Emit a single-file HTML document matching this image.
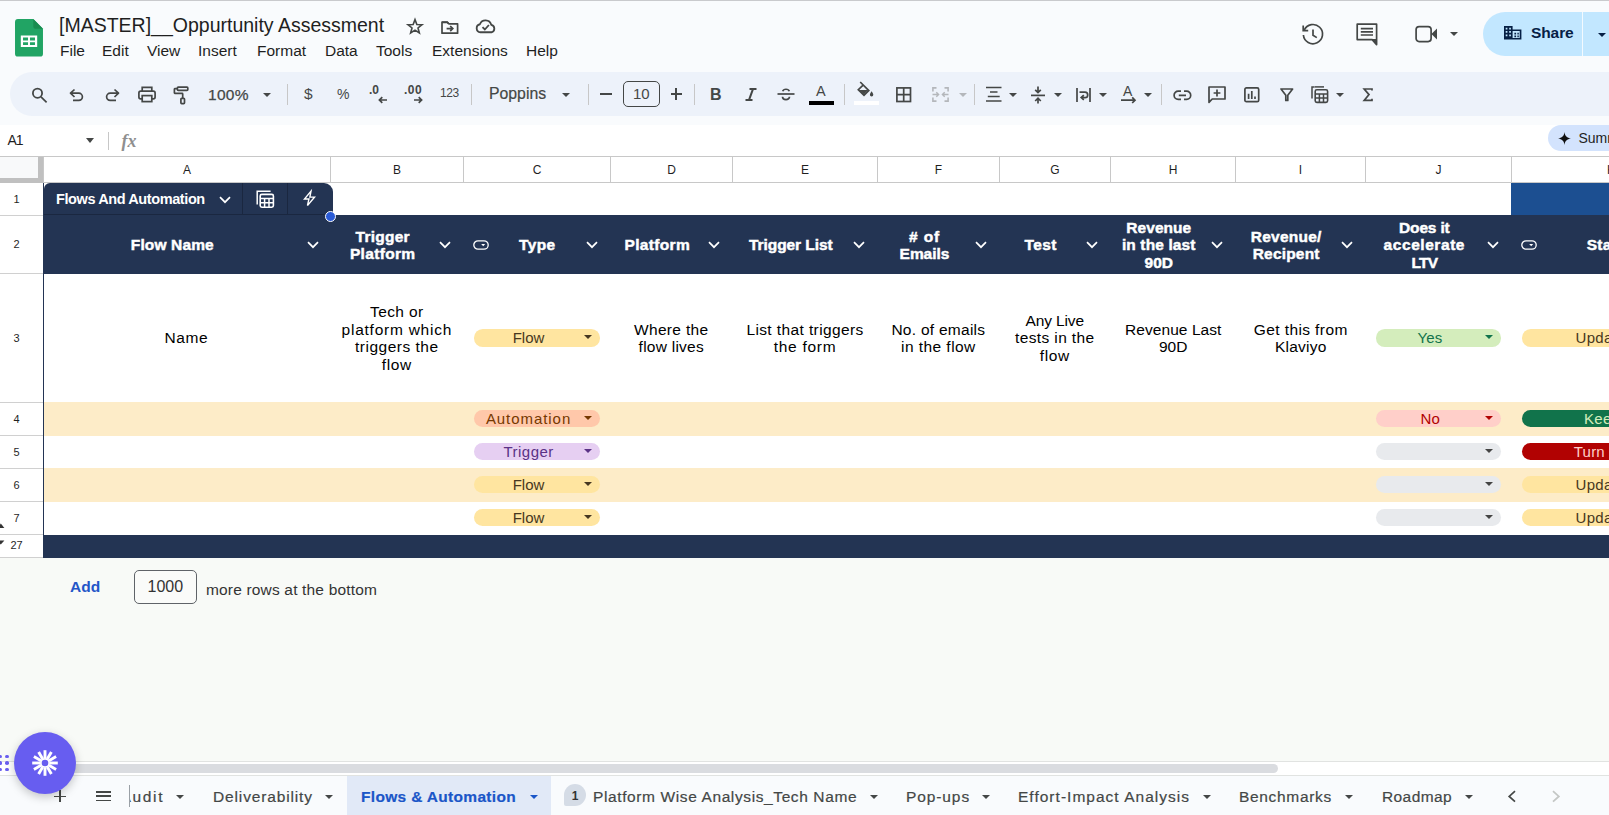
<!DOCTYPE html>
<html>
<head>
<meta charset="utf-8">
<title>Sheets</title>
<style>
*{box-sizing:border-box;margin:0;padding:0}
html,body{width:1609px;height:815px;overflow:hidden;background:#f9fbfd;font-family:"Liberation Sans",sans-serif;}
#root{position:relative;width:1609px;height:815px;overflow:hidden;background:#f9fbfd}
.abs{position:absolute}
.t{position:absolute;white-space:nowrap;color:#1f1f1f}
svg{position:absolute;overflow:visible}
/* grid */
.colh{position:absolute;top:157px;height:22px;font-size:12px;color:#1f1f1f;text-align:center;line-height:26px;border-right:1px solid #c8c8c8;background:#fff}
.rowh{position:absolute;left:0;width:43px;padding-right:10px;font-size:11px;color:#1f1f1f;text-align:center;background:#fff;border-bottom:1px solid #d0d0d0}
.hd{position:absolute;color:#fff;font-weight:bold;-webkit-text-stroke:0.45px #fff;white-space:nowrap;font-size:15.5px;line-height:18px}
.cell{position:absolute;color:#000;white-space:nowrap;font-size:15.5px;line-height:18px}
.chev{position:absolute;width:11px;height:7px}
.chip{position:absolute;height:17.5px;border-radius:8.75px;font-size:15px;line-height:17.5px}
.chip i{position:absolute;top:6.4px;width:0;height:0;border-left:4.3px solid transparent;border-right:4.3px solid transparent;border-top:4.8px solid #444}
.tab{position:absolute;top:776px;height:39px;font-size:16px;line-height:42px;-webkit-text-stroke:0.2px currentColor;color:#444746;letter-spacing:0.45px;white-space:nowrap}
.tri{position:absolute;width:0;height:0;border-left:4.5px solid transparent;border-right:4.5px solid transparent;border-top:5px solid #444746}
</style>
</head>
<body>
<div id="root">

<!-- TOP BAR -->
<div class="abs" style="left:0;top:0;width:1609px;height:1px;background:#c9cacd"></div>
<!-- sheets logo -->
<svg style="left:15px;top:18.5px" width="28" height="37.6" viewBox="0 0 29 39">
  <path d="M3 0h16l10 10v26a3 3 0 0 1-3 3H3a3 3 0 0 1-3-3V3a3 3 0 0 1 3-3z" fill="#21a464"/>
  <path d="M19 0l10 10h-8a2 2 0 0 1-2-2z" fill="#188c50"/>
  <path d="M6 17h17v12H6z M8.3 19.2v3h5.2v-3z M15.5 19.2v3h5.2v-3z M8.3 24v3h5.2v-3z M15.5 24v3h5.2v-3z" fill="#fff" fill-rule="evenodd"/>
</svg>
<div class="t" id="title" style="left:59px;top:12.2px;font-size:19.5px;line-height:26px;color:#1f1f1f">[MASTER]__Oppurtunity Assessment</div>

<svg style="left:405.1px;top:16.8px" width="20" height="20" viewBox="-10 -10 20 20"><polygon points="0.00,-7.40 1.85,-2.55 7.04,-2.29 3.00,0.97 4.35,5.99 0.00,3.15 -4.35,5.99 -3.00,0.97 -7.04,-2.29 -1.85,-2.55" fill="none" stroke="#444746" stroke-width="1.6" stroke-linejoin="miter"/></svg>
<svg style="left:441.2px;top:20.5px" width="18" height="14" viewBox="0 0 18 14"><path d="M1 12.2 V1 H6.2 L7.8 2.8 H16.6 V12.2 Z" fill="none" stroke="#444746" stroke-width="1.7" stroke-linejoin="round"/><path d="M1 1.4 H6.4 L7.6 2.8" fill="none" stroke="#444746" stroke-width="1.7" stroke-width="2.4"/><path d="M5.6 7.6 H11.6 M9.2 5 L11.8 7.6 L9.2 10.2" fill="none" stroke="#444746" stroke-width="1.7" stroke-width="1.6"/></svg>
<svg style="left:475.3px;top:19px" width="21.4" height="15" viewBox="0 0 20 14"><path d="M5 12.4 A3.8 3.8 0 0 1 4.6 4.9 A5.6 5.6 0 0 1 15.2 5.4 A3.6 3.6 0 0 1 15.4 12.4 Z" fill="none" stroke="#444746" stroke-width="1.7" stroke-linejoin="round"/><path d="M7 7.6 L9.2 9.8 L13 5.6" fill="none" stroke="#444746" stroke-width="1.7" stroke-width="1.5"/></svg>
<svg style="left:1301px;top:22.8px" width="24" height="24" viewBox="0 0 24 24"><path d="M3.2 7.2 A9.6 9.6 0 1 1 2.4 12" fill="none" stroke="#444746" stroke-width="1.7" stroke-width="2"/><path d="M2.2 2.6 V7.6 H7.2" fill="none" stroke="#444746" stroke-width="1.7" stroke-width="2"/><path d="M12 6.6 V12.2 L15.8 14.6" fill="none" stroke="#444746" stroke-width="1.7" stroke-width="2"/></svg>
<svg style="left:1356px;top:23px" width="23" height="23" viewBox="0 0 23 23"><path d="M1.2 1.2 H20.6 V21.6 L16.2 16.6 H1.2 Z" fill="none" stroke="#444746" stroke-width="1.7" stroke-width="2" stroke-linejoin="round"/><path d="M4.8 5.6 H17 M4.8 8.8 H17 M4.8 12 H17" fill="none" stroke="#444746" stroke-width="1.7" stroke-width="1.7"/><path d="M20.6 21.8 V16 H15.5Z" fill="#444746"/></svg>
<svg style="left:1415px;top:25px" width="23" height="18" viewBox="0 0 23 18"><rect x="1.1" y="1.6" width="15" height="15" rx="3" fill="none" stroke="#444746" stroke-width="1.7" stroke-width="2.1"/><path d="M16.4 9 L22 3.6 V14.6Z" fill="#444746"/></svg>
<div class="tri" style="left:1449.5px;top:32px;border-top-color:#444746;border-left-width:4.5px;border-right-width:4.5px;border-top-width:4.5px"></div>
<div class="abs" style="left:1483px;top:12px;width:150px;height:44px;border-radius:22px;background:#c2e7ff"></div>
<div class="abs" style="left:1582px;top:12px;width:1px;height:44px;background:#f3faff"></div>
<svg style="left:1504px;top:26px" width="18" height="14" viewBox="0 0 18 14"><path d="M0 0 H8.6 V3.4 H17.4 V13.6 H0 Z" fill="#062045"/><path d="M1.7 1.7h1.7v1.7h-1.7z M5.2 1.7h1.7v1.7h-1.7z M1.7 5.1h1.7v1.7h-1.7z M5.2 5.1h1.7v1.7h-1.7z M1.7 8.5h1.7v1.7h-1.7z M5.2 8.5h1.7v1.7h-1.7z M8.6 5.1h7.1v6.8h-7.1z" fill="#c2e7ff"/><path d="M10.4 6.8h1.7v1.7h-1.7z M13.4 6.8h1.4v1.7h-1.4z M10.4 9.6h1.7v1.6h-1.7z M13.4 9.6h1.4v1.6h-1.4z" fill="#062045"/></svg>
<div class="t" style="left:1531px;top:23px;font-size:15.5px;line-height:20px;font-weight:bold;color:#062045;letter-spacing:-0.1px">Share</div>
<div class="tri" style="left:1597.5px;top:32.5px;border-top-color:#062045;border-left-width:4.5px;border-right-width:4.5px;border-top-width:4.5px"></div>
<!-- MENU -->
<div class="t menu" style="left:60px;top:41.4px;font-size:15.5px;line-height:20px">File</div>
<div class="t menu" style="left:102px;top:41.4px;font-size:15.5px;line-height:20px">Edit</div>
<div class="t menu" style="left:147px;top:41.4px;font-size:15.5px;line-height:20px">View</div>
<div class="t menu" style="left:198px;top:41.4px;font-size:15.5px;line-height:20px">Insert</div>
<div class="t menu" style="left:257px;top:41.4px;font-size:15.5px;line-height:20px">Format</div>
<div class="t menu" style="left:325px;top:41.4px;font-size:15.5px;line-height:20px">Data</div>
<div class="t menu" style="left:376px;top:41.4px;font-size:15.5px;line-height:20px">Tools</div>
<div class="t menu" style="left:432px;top:41.4px;font-size:15.5px;line-height:20px">Extensions</div>
<div class="t menu" style="left:526px;top:41.4px;font-size:15.5px;line-height:20px">Help</div>

<!-- TOOLBAR PILL -->
<div class="abs" style="left:10px;top:72px;width:1640px;height:44px;border-radius:22px;background:#edf2fa"></div>

<svg style="left:29px;top:85px" width="20" height="20" viewBox="0 0 20 20"><circle cx="8.5" cy="8.2" r="4.6" fill="none" stroke="#444746" stroke-width="1.8"/><path d="M12 11.8 L17.6 17.4" fill="none" stroke="#444746" stroke-width="1.7" stroke-width="2"/></svg>
<svg style="left:69px;top:88px" width="16" height="14" viewBox="0 0 16 14"><path d="M5.5 1.5 L1.5 5.2 L5.5 9 M1.8 5.2 H9.8 A3.6 3.6 0 0 1 9.8 12.4 H4" fill="none" stroke="#444746" stroke-width="1.7" stroke-linejoin="round"/></svg>
<svg style="left:104px;top:88px" width="16" height="14" viewBox="0 0 16 14"><path d="M10.5 1.5 L14.5 5.2 L10.5 9 M14.2 5.2 H6.2 A3.6 3.6 0 0 0 6.2 12.4 H12" fill="none" stroke="#444746" stroke-width="1.7" stroke-linejoin="round"/></svg>
<svg style="left:138px;top:86px" width="18" height="17" viewBox="0 0 18 17"><path d="M4.2 5.2 V1.3 H13.8 V5.2" fill="none" stroke="#444746" stroke-width="1.7"/><rect x="0.9" y="5.2" width="16.2" height="7.6" rx="1.8" fill="none" stroke="#444746" stroke-width="1.7"/><rect x="4.2" y="9.6" width="9.6" height="6" fill="#edf2fa" stroke="#444746" stroke-width="1.7"/></svg>
<svg style="left:172px;top:85px" width="18" height="20" viewBox="0 0 18 20"><rect x="5.4" y="2.1" width="10.4" height="3.2" rx="0.8" fill="none" stroke="#444746" stroke-width="1.7"/><path d="M5.4 3.7 H2.9 A0.6 0.6 0 0 0 2.4 4.3 V7.8 A0.6 0.6 0 0 0 2.9 8.3 H10.1 A0.6 0.6 0 0 1 10.7 8.9 V13" fill="none" stroke="#444746" stroke-width="1.7"/><rect x="8.9" y="13.3" width="3.6" height="5.3" rx="0.8" fill="none" stroke="#444746" stroke-width="1.7"/></svg>
<div class="t" style="left:208px;top:85.4px;font-size:15.5px;line-height:20px;color:#444746;letter-spacing:0.3px;-webkit-text-stroke:0.25px #444746">100%</div>
<div class="tri" style="left:263.0px;top:93px;border-top-color:#444746;border-left-width:4.5px;border-right-width:4.5px;border-top-width:4.5px"></div>
<div class="abs" style="left:287px;top:84px;width:1px;height:21px;background:#c7c7c7"></div>
<div class="t" style="left:304px;top:84px;font-size:15.5px;line-height:20px;color:#444746;">$</div>
<div class="t" style="left:337px;top:84px;font-size:14px;line-height:20px;color:#444746;">%</div>
<div class="t" style="left:369px;top:82px;font-size:12px;line-height:16px;color:#444746;font-weight:bold">.0</div>
<svg style="left:378px;top:96px" width="10" height="8" viewBox="0 0 10 8"><path d="M9 4 H1.5 M4.3 1.2 L1.4 4 L4.3 6.8" fill="none" stroke="#444746" stroke-width="1.7" stroke-width="1.4"/></svg>
<div class="t" style="left:404px;top:82px;font-size:12px;line-height:16px;color:#444746;font-weight:bold;letter-spacing:0.5px">.00</div>
<svg style="left:413px;top:96px" width="10" height="8" viewBox="0 0 10 8"><path d="M1 4 H8.5 M5.7 1.2 L8.6 4 L5.7 6.8" fill="none" stroke="#444746" stroke-width="1.7" stroke-width="1.4"/></svg>
<div class="t" style="left:440px;top:84px;font-size:12px;line-height:18px;color:#444746;letter-spacing:-0.4px">123</div>
<div class="abs" style="left:471px;top:84px;width:1px;height:21px;background:#c7c7c7"></div>
<div class="t" style="left:489px;top:84px;font-size:15.8px;line-height:20px;color:#444746;-webkit-text-stroke:0.2px #444746">Poppins</div>
<div class="tri" style="left:562.0px;top:93px;border-top-color:#444746;border-left-width:4.5px;border-right-width:4.5px;border-top-width:4.5px"></div>
<div class="abs" style="left:588px;top:84px;width:1px;height:21px;background:#c7c7c7"></div>
<div class="abs" style="left:600px;top:93.2px;width:12px;height:1.6px;background:#444746"></div>
<div class="abs" style="left:623px;top:81px;width:37px;height:26px;border:1px solid #444746;border-radius:5px"></div>
<div class="t" style="left:633px;top:84.3px;font-size:15px;line-height:20px;color:#444746;">10</div>
<div class="abs" style="left:670.5px;top:93.2px;width:11.5px;height:1.6px;background:#444746"></div>
<div class="abs" style="left:675.4px;top:88.2px;width:1.6px;height:11.5px;background:#444746"></div>
<div class="abs" style="left:694px;top:84px;width:1px;height:21px;background:#c7c7c7"></div>
<div class="t" style="left:710px;top:85px;font-size:16px;line-height:20px;color:#444746;font-weight:bold">B</div>
<svg style="left:745px;top:88px" width="12" height="12" viewBox="0 0 12 12"><path d="M4.5 1 H11.5 M0.5 12 H7.5 M8 1 L4 12" fill="none" stroke="#444746" stroke-width="2.1"/></svg>
<svg style="left:777px;top:86px" width="18" height="16" viewBox="0 0 18 16"><path d="M0.5 8 H17.5" fill="none" stroke="#444746" stroke-width="1.7" stroke-width="1.5"/><path d="M12.3 5.2 A3.4 2.6 0 0 0 5.7 5.2 M5.5 10.8 A3.5 2.8 0 0 0 12.5 10.8" fill="none" stroke="#444746" stroke-width="1.7" stroke-width="1.9"/></svg>
<div class="t" style="left:816px;top:81px;font-size:14.5px;line-height:20px;color:#444746;">A</div>
<div class="abs" style="left:809px;top:101px;width:25px;height:4px;background:#000"></div>
<div class="abs" style="left:844px;top:84px;width:1px;height:21px;background:#c7c7c7"></div>
<svg style="left:857px;top:81px" width="18" height="17" viewBox="0 0 18 17"><path d="M3.2 1 L11.8 9.6 L7 14.4 L1.3 8.7 L6.4 3.8" fill="none" stroke="#444746" stroke-width="1.7" stroke-width="1.6"/><path d="M2.2 8.9 H11.4 L7 13.4Z" fill="#444746"/><path d="M14.6 10.2 C15.6 11.8 16.3 12.7 16.3 13.7 A1.7 1.7 0 0 1 12.9 13.7 C12.9 12.7 13.6 11.8 14.6 10.2Z" fill="#444746"/></svg>
<div class="abs" style="left:854px;top:101px;width:25px;height:4px;background:#fff"></div>
<svg style="left:896px;top:86.5px" width="16" height="16" viewBox="0 0 16 16"><rect x="0.9" y="0.9" width="13.6" height="13.6" fill="none" stroke="#444746" stroke-width="1.7"/><path d="M7.7 0.9 V14.5 M0.9 7.7 H14.5" fill="none" stroke="#444746" stroke-width="1.7"/></svg>
<svg style="left:931.5px;top:86.5px" width="18" height="16" viewBox="0 0 18 16"><path d="M4.5 0.9 H0.9 V4.5 M0.9 10.5 V14.1 H4.5 M12.5 0.9 H16.1 V4.5 M16.1 10.5 V14.1 H12.5" fill="none" stroke="#b4b7bb" stroke-width="1.6"/><path d="M0.5 7.5 H6.5 M4.3 5.2 L6.6 7.5 L4.3 9.8 M16.5 7.5 H10.5 M12.7 5.2 L10.4 7.5 L12.7 9.8" fill="none" stroke="#b4b7bb" stroke-width="1.4"/></svg>
<div class="tri" style="left:958.5px;top:93px;border-top-color:#b4b7bb;border-left-width:4.5px;border-right-width:4.5px;border-top-width:4.5px"></div>
<div class="abs" style="left:974px;top:84px;width:1px;height:21px;background:#c7c7c7"></div>
<svg style="left:985.5px;top:86px" width="16" height="17" viewBox="0 0 16 17"><path d="M0 1.5 H15.5 M4 6 H11.5 M1.8 10.5 H13.7 M0 15 H15.5" fill="none" stroke="#444746" stroke-width="1.7" stroke-width="1.5"/></svg>
<div class="tri" style="left:1008.5px;top:93px;border-top-color:#444746;border-left-width:4.5px;border-right-width:4.5px;border-top-width:4.5px"></div>
<svg style="left:1030.5px;top:85.5px" width="14" height="18" viewBox="0 0 14 18"><path d="M0 9.4 H14" fill="none" stroke="#444746" stroke-width="1.7" stroke-width="1.5"/><path d="M7 0.5 V6.5 M4.2 3.8 L7 6.6 L9.8 3.8 M7 17.5 V12.2 M4.2 15 L7 12.2 L9.8 15" fill="none" stroke="#444746" stroke-width="1.7" stroke-width="1.5"/></svg>
<div class="tri" style="left:1053.5px;top:93px;border-top-color:#444746;border-left-width:4.5px;border-right-width:4.5px;border-top-width:4.5px"></div>
<svg style="left:1075.5px;top:87.5px" width="15" height="14" viewBox="0 0 15 14"><path d="M1 0 V14 M14 0 V14" fill="none" stroke="#444746" stroke-width="1.7" stroke-width="1.6"/><path d="M3.5 4.2 H9 A2.6 2.6 0 0 1 9 9.6 H5.5 M7.8 7.2 L5.2 9.6 L7.8 12" fill="none" stroke="#444746" stroke-width="1.7" stroke-width="1.5"/></svg>
<div class="tri" style="left:1098.5px;top:93px;border-top-color:#444746;border-left-width:4.5px;border-right-width:4.5px;border-top-width:4.5px"></div>
<div class="t" style="left:1123px;top:80.5px;font-size:14px;line-height:20px;color:#444746;">A</div>
<svg style="left:1121px;top:96px" width="16" height="8" viewBox="0 0 16 8"><path d="M0 4.2 H14 M11.2 1.4 L14 4.2 L11.2 7" fill="none" stroke="#444746" stroke-width="1.7" stroke-width="1.5"/></svg>
<div class="tri" style="left:1143.5px;top:93px;border-top-color:#444746;border-left-width:4.5px;border-right-width:4.5px;border-top-width:4.5px"></div>
<div class="abs" style="left:1161px;top:84px;width:1px;height:21px;background:#c7c7c7"></div>
<svg style="left:1173px;top:89.5px" width="19" height="11" viewBox="0 0 19 11"><path d="M8 1.2 H5.2 A4 4 0 0 0 5.2 9.4 H8 M11 1.2 H13.6 A4 4 0 0 1 13.6 9.4 H11 M5.8 5.3 H13" fill="none" stroke="#444746" stroke-width="1.7" stroke-width="1.8"/></svg>
<svg style="left:1208px;top:86px" width="18" height="18" viewBox="0 0 18 18"><path d="M1 1 H17 V13 H4.2 L1 16.4 Z" fill="none" stroke="#444746" stroke-width="1.7" stroke-linejoin="round"/><path d="M5.6 7 H12.4 M9 3.6 V10.4" fill="none" stroke="#444746" stroke-width="1.7" stroke-width="1.6"/></svg>
<svg style="left:1244px;top:87px" width="16" height="16" viewBox="0 0 16 16"><rect x="0.9" y="0.9" width="13.8" height="13.8" rx="1.5" fill="none" stroke="#444746" stroke-width="1.7"/><path d="M4.6 12 V6.8 M7.8 12 V4 M11 12 V9.6" fill="none" stroke="#444746" stroke-width="1.7" stroke-width="1.7"/></svg>
<svg style="left:1280px;top:88px" width="14" height="14" viewBox="0 0 14 14"><path d="M1 1 H12.6 L7.8 7.2 V12.4 H5.8 V7.2 Z" fill="none" stroke="#444746" stroke-width="1.7" stroke-linejoin="round"/></svg>
<svg style="left:1310.5px;top:85.5px" width="18" height="18" viewBox="0 0 18 18"><path d="M3.6 1 H1 V12.4" fill="none" stroke="#444746" stroke-width="1.5"/><path d="M3.8 0.9 H13" fill="none" stroke="#444746" stroke-width="1.5"/><rect x="4.2" y="3.8" width="12.4" height="12.6" rx="1.6" fill="none" stroke="#444746" stroke-width="1.6"/><path d="M4.2 8 H16.6 M4.2 12.1 H16.6 M8.4 8 V16.4 M12.5 8 V16.4" fill="none" stroke="#444746" stroke-width="1.5"/></svg>
<div class="tri" style="left:1335.5px;top:93px;border-top-color:#444746;border-left-width:4.5px;border-right-width:4.5px;border-top-width:4.5px"></div>
<svg style="left:1363px;top:88px" width="10" height="14" viewBox="0 0 10 14"><path d="M9 2.6 V1 H1.2 L6 6.6 L1.2 12.4 H9 V10.8" fill="none" stroke="#444746" stroke-width="1.7" stroke-width="1.9" stroke-linejoin="miter"/></svg>
<!-- FORMULA BAR -->
<div class="abs" style="left:0;top:125px;width:1609px;height:31px;background:#fff"></div>
<div class="abs" style="left:0;top:156px;width:1609px;height:1px;background:#c8c8c8"></div>
<div class="t" style="left:7.5px;top:131px;font-size:14px;line-height:18px;color:#1f1f1f;letter-spacing:-1.2px">A1</div>
<div class="tri" style="left:86px;top:138px"></div>
<div class="abs" style="left:108px;top:132px;width:1px;height:18px;background:#c7c7c7"></div>
<div class="t" style="left:121.5px;top:131px;font-family:'Liberation Serif',serif;font-style:italic;font-weight:bold;font-size:18px;line-height:20px;color:#8f8f8f">fx</div>

<div class="abs" style="left:1548px;top:125px;width:120px;height:26px;border-radius:13px;background:#d3e3fd"></div>
<svg style="left:1558px;top:132px" width="13" height="13" viewBox="0 0 13 13"><path d="M6.5 0 C7 4 9 6 13 6.5 C9 7 7 9 6.5 13 C6 9 4 7 0 6.5 C4 6 6 4 6.5 0Z" fill="#111"/></svg>
<div class="t" style="left:1578.5px;top:127.6px;font-size:14px;line-height:20px;color:#1f1f1f">Summarize</div>
<!-- BELOW GRID -->
<div class="abs" style="left:0;top:558px;width:1609px;height:218px;background:#f8faf7"></div>
<!-- GRID -->
<div id="grid" class="abs" style="left:0;top:157px;width:1609px;height:401px;background:#fff"></div>
<div class="abs" style="left:0;top:157px;width:1609px;height:26px;background:#fff"></div>
<div class="abs" style="left:0;top:157px;width:43px;height:26px;background:#f8f9fa"></div>
<div class="abs" style="left:38px;top:157px;width:5px;height:26px;background:#c0c0c0"></div>
<div class="abs" style="left:0;top:178px;width:43px;height:5px;background:#c0c0c0"></div>
<div class="colh" style="left:44px;width:287px;height:25px">A</div>
<div class="colh" style="left:331px;width:133px;height:25px">B</div>
<div class="colh" style="left:464px;width:147px;height:25px">C</div>
<div class="colh" style="left:611px;width:122px;height:25px">D</div>
<div class="colh" style="left:733px;width:145px;height:25px">E</div>
<div class="colh" style="left:878px;width:122px;height:25px">F</div>
<div class="colh" style="left:1000px;width:111px;height:25px">G</div>
<div class="colh" style="left:1111px;width:125px;height:25px">H</div>
<div class="colh" style="left:1236px;width:130px;height:25px">I</div>
<div class="colh" style="left:1366px;width:146px;height:25px">J</div>
<div class="colh" style="left:1512px;width:199px;height:25px">K</div>
<div class="abs" style="left:43px;top:182px;width:1566px;height:1px;background:#c8c8c8"></div>
<div class="abs" style="left:43px;top:157px;width:1px;height:401px;background:#c8c8c8"></div>
<div class="rowh" style="top:183px;height:33px;line-height:32px">1</div>
<div class="rowh" style="top:216px;height:58px;line-height:57px">2</div>
<div class="rowh" style="top:274px;height:129px;line-height:128px">3</div>
<div class="rowh" style="top:403px;height:33px;line-height:32px">4</div>
<div class="rowh" style="top:436px;height:33px;line-height:32px">5</div>
<div class="rowh" style="top:469px;height:33px;line-height:32px">6</div>
<div class="rowh" style="top:502px;height:33px;line-height:32px">7</div>
<div class="rowh" style="top:535px;height:23px;line-height:20px">27</div>
<div class="abs" style="left:44px;top:402px;width:1565px;height:33.6px;background:#fdecc8"></div>
<div class="abs" style="left:44px;top:468px;width:1565px;height:33.6px;background:#fdecc8"></div>
<div class="abs" style="left:44px;top:215px;width:1565px;height:59px;background:#233453"></div>
<div class="abs" style="left:44px;top:535px;width:1565px;height:23px;background:#233453"></div>
<div class="abs" style="left:44px;top:183px;width:289px;height:33px;background:#233453;border-radius:6px 9px 0 0"></div>
<div class="abs" style="left:242px;top:183px;width:1px;height:32px;background:#1a2740"></div>
<div class="abs" style="left:287px;top:183px;width:1px;height:32px;background:#1a2740"></div>
<div class="abs" style="left:44px;top:214px;width:288px;height:1px;background:#1a2740"></div>
<div class="abs" style="left:1511px;top:183px;width:98px;height:32px;background:#1c4f91"></div>
<div class="abs" style="left:43px;top:183px;width:1px;height:375px;background:#233453"></div>
<div class="t" style="left:56px;top:190px;font-size:14.5px;line-height:18px;font-weight:bold;color:#fff;letter-spacing:-0.4px">Flows And Automation</div>
<div class="abs" style="left:324.6px;top:210.8px;width:11.6px;height:11.6px;border-radius:50%;background:#2a5bd7;border:1px solid #fff"></div>
<svg style="left:218.5px;top:196px" width="12" height="8" viewBox="0 0 12 8"><path d="M1 1.2 L6 6.2 L11 1.2" fill="none" stroke="#fff" stroke-width="1.7"/></svg>
<svg style="left:306.5px;top:241px" width="12" height="8" viewBox="0 0 12 8"><path d="M1 1.2 L6 6.2 L11 1.2" fill="none" stroke="#fff" stroke-width="1.7"/></svg>
<svg style="left:439px;top:241px" width="12" height="8" viewBox="0 0 12 8"><path d="M1 1.2 L6 6.2 L11 1.2" fill="none" stroke="#fff" stroke-width="1.7"/></svg>
<svg style="left:586px;top:241px" width="12" height="8" viewBox="0 0 12 8"><path d="M1 1.2 L6 6.2 L11 1.2" fill="none" stroke="#fff" stroke-width="1.7"/></svg>
<svg style="left:708px;top:241px" width="12" height="8" viewBox="0 0 12 8"><path d="M1 1.2 L6 6.2 L11 1.2" fill="none" stroke="#fff" stroke-width="1.7"/></svg>
<svg style="left:853px;top:241px" width="12" height="8" viewBox="0 0 12 8"><path d="M1 1.2 L6 6.2 L11 1.2" fill="none" stroke="#fff" stroke-width="1.7"/></svg>
<svg style="left:975px;top:241px" width="12" height="8" viewBox="0 0 12 8"><path d="M1 1.2 L6 6.2 L11 1.2" fill="none" stroke="#fff" stroke-width="1.7"/></svg>
<svg style="left:1086px;top:241px" width="12" height="8" viewBox="0 0 12 8"><path d="M1 1.2 L6 6.2 L11 1.2" fill="none" stroke="#fff" stroke-width="1.7"/></svg>
<svg style="left:1211px;top:241px" width="12" height="8" viewBox="0 0 12 8"><path d="M1 1.2 L6 6.2 L11 1.2" fill="none" stroke="#fff" stroke-width="1.7"/></svg>
<svg style="left:1341px;top:241px" width="12" height="8" viewBox="0 0 12 8"><path d="M1 1.2 L6 6.2 L11 1.2" fill="none" stroke="#fff" stroke-width="1.7"/></svg>
<svg style="left:1487px;top:241px" width="12" height="8" viewBox="0 0 12 8"><path d="M1 1.2 L6 6.2 L11 1.2" fill="none" stroke="#fff" stroke-width="1.7"/></svg>
<svg style="left:473px;top:240px" width="16" height="10" viewBox="0 0 16 10"><rect x="0.8" y="0.8" width="14.4" height="8.4" rx="4.2" fill="none" stroke="#fff" stroke-width="1.3"/><path d="M8.2 4 h4 l-2 2.2z" fill="#fff"/></svg>
<svg style="left:1521px;top:240px" width="16" height="10" viewBox="0 0 16 10"><rect x="0.8" y="0.8" width="14.4" height="8.4" rx="4.2" fill="none" stroke="#fff" stroke-width="1.3"/><path d="M8.2 4 h4 l-2 2.2z" fill="#fff"/></svg>
<div class="t" style="left:70px;top:577px;font-size:15.5px;line-height:20px;font-weight:bold;color:#2456c8">Add</div>
<div class="abs" style="left:134px;top:570px;width:63px;height:34px;border:1px solid #5f6368;border-radius:5px;background:#fafbf9"></div>
<div class="t" style="left:147.5px;top:577px;font-size:16px;line-height:20px;color:#333">1000</div>
<div class="t" style="left:206px;top:580px;font-size:15.5px;line-height:20px;color:#333;letter-spacing:0.17px">more rows at the bottom</div>
<svg style="left:255.5px;top:189.5px" width="19" height="19" viewBox="0 0 19 19"><path d="M1.2 14.6 V1.2 H14.6" fill="none" stroke="#fff" stroke-width="1.5"/><rect x="4.2" y="4.4" width="13.2" height="12.8" rx="1.6" fill="none" stroke="#fff" stroke-width="1.6"/><path d="M4.2 8.6 H17.4 M4.2 12.8 H17.4 M8.6 8.6 V17.2 M13 8.6 V17.2" fill="none" stroke="#fff" stroke-width="1.5"/></svg>
<svg style="left:303px;top:190.2px" width="13" height="16.8" viewBox="0 0 14 18"><path d="M8.6 1.2 L1.6 9.6 H6.4 L4.8 16.6 L12.4 7.6 H7.4 Z" fill="none" stroke="#fff" stroke-width="1.5" stroke-linejoin="miter"/></svg>
<div class="hd" style="left:130.8px;top:236.4px;letter-spacing:0.13px">Flow Name</div>
<div class="hd" style="left:355.6px;top:227.6px;letter-spacing:0.25px">Trigger</div>
<div class="hd" style="left:349.9px;top:245.1px;letter-spacing:0.34px">Platform</div>
<div class="hd" style="left:519.0px;top:236.4px;letter-spacing:0.39px">Type</div>
<div class="hd" style="left:624.5px;top:236.4px;letter-spacing:0.34px">Platform</div>
<div class="hd" style="left:749.0px;top:236.4px;letter-spacing:-0.07px">Trigger List</div>
<div class="hd" style="left:909.0px;top:227.6px;letter-spacing:0.86px"># of</div>
<div class="hd" style="left:899.6px;top:245.1px;letter-spacing:-0.05px">Emails</div>
<div class="hd" style="left:1024.6px;top:236.4px;letter-spacing:0.37px">Test</div>
<div class="hd" style="left:1126.3px;top:218.9px;letter-spacing:0.05px">Revenue</div>
<div class="hd" style="left:1121.9px;top:236.4px;letter-spacing:0.13px">in the last</div>
<div class="hd" style="left:1144.6px;top:253.9px;letter-spacing:-0.01px">90D</div>
<div class="hd" style="left:1250.7px;top:227.6px;letter-spacing:0.26px">Revenue/</div>
<div class="hd" style="left:1252.7px;top:245.1px;letter-spacing:0.19px">Recipent</div>
<div class="hd" style="left:1399.1px;top:218.9px;letter-spacing:-0.18px">Does it</div>
<div class="hd" style="left:1383.6px;top:236.4px;letter-spacing:0.56px">accelerate</div>
<div class="hd" style="left:1411.4px;top:253.9px;letter-spacing:-0.77px">LTV</div>
<div class="hd" style="left:1586.8px;top:236.4px;letter-spacing:0.2px">Status</div>
<div class="cell" style="left:164.4px;top:329.3px;letter-spacing:0.66px">Name</div>
<div class="cell" style="left:370.1px;top:303.1px;letter-spacing:0.38px">Tech or</div>
<div class="cell" style="left:341.6px;top:320.6px;letter-spacing:0.75px">platform which</div>
<div class="cell" style="left:355.0px;top:338.1px;letter-spacing:0.50px">triggers the</div>
<div class="cell" style="left:381.8px;top:355.6px;letter-spacing:0.61px">flow</div>
<div class="cell" style="left:634.0px;top:320.6px;letter-spacing:0.33px">Where the</div>
<div class="cell" style="left:638.6px;top:338.1px;letter-spacing:0.25px">flow lives</div>
<div class="cell" style="left:746.4px;top:320.6px;letter-spacing:0.39px">List that triggers</div>
<div class="cell" style="left:773.7px;top:338.1px;letter-spacing:0.72px">the form</div>
<div class="cell" style="left:891.4px;top:320.6px;letter-spacing:0.27px">No. of emails</div>
<div class="cell" style="left:901.0px;top:338.1px;letter-spacing:0.45px">in the flow</div>
<div class="cell" style="left:1025.6px;top:311.8px;letter-spacing:-0.14px">Any Live</div>
<div class="cell" style="left:1015.0px;top:329.3px;letter-spacing:0.38px">tests in the</div>
<div class="cell" style="left:1039.8px;top:346.8px;letter-spacing:0.61px">flow</div>
<div class="cell" style="left:1125.0px;top:320.6px;letter-spacing:0.07px">Revenue Last</div>
<div class="cell" style="left:1159.0px;top:338.1px;letter-spacing:-0.01px">90D</div>
<div class="cell" style="left:1253.8px;top:320.6px;letter-spacing:0.40px">Get this from</div>
<div class="cell" style="left:1275.0px;top:338.1px;letter-spacing:0.22px">Klaviyo</div>
<div class="chip" style="left:474px;width:126px;top:329.05px;background:#ffe5a0"><span style="position:absolute;left:38.7px;top:0.3px;color:#473821;letter-spacing:-0.02px;white-space:nowrap">Flow</span><i style="left:110.4px;border-top-color:#473821"></i></div>
<div class="chip" style="left:474px;width:126px;top:409.60px;background:#ffc8aa"><span style="position:absolute;left:11.9px;top:0.3px;color:#753800;letter-spacing:0.94px;white-space:nowrap">Automation</span><i style="left:110.4px;border-top-color:#753800"></i></div>
<div class="chip" style="left:474px;width:126px;top:442.60px;background:#e6cff2"><span style="position:absolute;left:29.4px;top:0.3px;color:#5a3286;letter-spacing:0.49px;white-space:nowrap">Trigger</span><i style="left:110.4px;border-top-color:#5a3286"></i></div>
<div class="chip" style="left:474px;width:126px;top:475.50px;background:#ffe5a0"><span style="position:absolute;left:38.7px;top:0.3px;color:#473821;letter-spacing:-0.02px;white-space:nowrap">Flow</span><i style="left:110.4px;border-top-color:#473821"></i></div>
<div class="chip" style="left:474px;width:126px;top:508.50px;background:#ffe5a0"><span style="position:absolute;left:38.7px;top:0.3px;color:#473821;letter-spacing:-0.02px;white-space:nowrap">Flow</span><i style="left:110.4px;border-top-color:#473821"></i></div>
<div class="chip" style="left:1376px;width:125.29999999999995px;top:329.05px;background:#d4edbc"><span style="position:absolute;left:41.5px;top:0.3px;color:#11734b;letter-spacing:0.17px;white-space:nowrap">Yes</span><i style="left:109.2px;border-top-color:#11734b"></i></div>
<div class="chip" style="left:1376px;width:125.29999999999995px;top:409.60px;background:#ffcfc9"><span style="position:absolute;left:44.6px;top:0.3px;color:#b10202;letter-spacing:0.11px;white-space:nowrap">No</span><i style="left:109.2px;border-top-color:#b10202"></i></div>
<div class="chip" style="left:1376px;width:125.29999999999995px;top:442.60px;background:#e8eaed"><i style="left:109.2px;border-top-color:#444"></i></div>
<div class="chip" style="left:1376px;width:125.29999999999995px;top:475.50px;background:#e8eaed"><i style="left:109.2px;border-top-color:#444"></i></div>
<div class="chip" style="left:1376px;width:125.29999999999995px;top:508.50px;background:#e8eaed"><i style="left:109.2px;border-top-color:#444"></i></div>
<div class="chip" style="left:1522px;width:130px;top:329.05px;background:#ffe5a0"><span style="position:absolute;left:53.5px;top:0.3px;color:#473821;white-space:nowrap;letter-spacing:0.3px">Update</span></div>
<div class="chip" style="left:1522px;width:130px;top:409.60px;background:#11734b"><span style="position:absolute;left:62px;top:0.3px;color:#d4edbc;white-space:nowrap;letter-spacing:0.3px">Keep</span></div>
<div class="chip" style="left:1522px;width:130px;top:442.60px;background:#b10202"><span style="position:absolute;left:51.799999999999955px;top:0.3px;color:#ffcfc9;white-space:nowrap;letter-spacing:0.2px">Turn off</span></div>
<div class="chip" style="left:1522px;width:130px;top:475.50px;background:#ffe5a0"><span style="position:absolute;left:53.5px;top:0.3px;color:#473821;white-space:nowrap;letter-spacing:0.3px">Update</span></div>
<div class="chip" style="left:1522px;width:130px;top:508.50px;background:#ffe5a0"><span style="position:absolute;left:53.5px;top:0.3px;color:#473821;white-space:nowrap;letter-spacing:0.3px">Update</span></div>
<svg style="left:0;top:520px" width="8" height="28" viewBox="0 0 8 28"><path d="M-3 8 L0.8 3.6 L4.4 8Z" fill="#333"/><path d="M-3 20.6 H4.4 L0.8 24.6Z" fill="#333"/></svg>
<!--GRIDBODY-->

<div class="abs" style="left:0;top:761px;width:1609px;height:15px;background:#fff;border-top:1px solid #e1e3e1;border-bottom:1px solid #e1e3e1"></div>
<div class="abs" style="left:60px;top:764px;width:1218px;height:9px;border-radius:0 5px 5px 0;background:#dadce0"></div>
<div class="abs" style="left:0;top:776px;width:1609px;height:39px;background:#f9fbfd"></div>
<div class="abs" style="left:347px;top:776px;width:204px;height:39px;background:#e1e9f7"></div>
<div class="abs" style="left:54px;top:795.5px;width:12px;height:1.7px;background:#444746"></div><div class="abs" style="left:59.2px;top:790.3px;width:1.7px;height:12px;background:#444746"></div>
<div class="abs" style="left:95.5px;top:791.1px;width:15.5px;height:1.9px;background:#444746"></div>
<div class="abs" style="left:95.5px;top:795.3px;width:15.5px;height:1.9px;background:#444746"></div>
<div class="abs" style="left:95.5px;top:799.5px;width:15.5px;height:1.9px;background:#444746"></div>
<div class="abs" style="left:129px;top:785px;width:1px;height:22px;background:#9aa0a6"></div>
<div class="abs" style="left:130px;top:776px;width:40px;height:39px;overflow:hidden"><div class="tab" style="left:-9.6px;top:0;font-size:15.5px;letter-spacing:1.7px">Audit</div></div>
<div class="tri" style="left:175.5px;top:794.5px;border-top-color:#444746;border-left-width:4.5px;border-right-width:4.5px;border-top-width:4.5px"></div>
<div class="tab" style="left:213px;font-size:15.5px;letter-spacing:0.86px;color:#444746;">Deliverability</div><div class="tri" style="left:324.5px;top:794.5px;border-top-color:#444746;border-left-width:4.5px;border-right-width:4.5px;border-top-width:4.5px"></div>
<div class="tab" style="left:361px;font-size:15.5px;letter-spacing:0.32px;color:#1a56c8;font-weight:bold;">Flows &amp; Automation</div><div class="tri" style="left:529.5px;top:794.5px;border-top-color:#1a56c8;border-left-width:4.5px;border-right-width:4.5px;border-top-width:4.5px"></div>
<div class="abs" style="left:564px;top:784px;width:22px;height:22px;border-radius:11px 11px 11px 2px;background:#d5dce6"></div>
<div class="t" style="left:564px;width:22px;text-align:center;top:788px;font-size:12px;line-height:16px;font-weight:bold;color:#333">1</div>
<div class="tab" style="left:593px;font-size:15.5px;letter-spacing:0.61px;color:#444746;">Platform Wise Analysis_Tech Name</div><div class="tri" style="left:869.5px;top:794.5px;border-top-color:#444746;border-left-width:4.5px;border-right-width:4.5px;border-top-width:4.5px"></div>
<div class="tab" style="left:906px;font-size:15.5px;letter-spacing:0.90px;color:#444746;">Pop-ups</div><div class="tri" style="left:981.5px;top:794.5px;border-top-color:#444746;border-left-width:4.5px;border-right-width:4.5px;border-top-width:4.5px"></div>
<div class="tab" style="left:1018px;font-size:15.5px;letter-spacing:1.02px;color:#444746;">Effort-Impact Analysis</div><div class="tri" style="left:1202.5px;top:794.5px;border-top-color:#444746;border-left-width:4.5px;border-right-width:4.5px;border-top-width:4.5px"></div>
<div class="tab" style="left:1239px;font-size:15.5px;letter-spacing:0.68px;color:#444746;">Benchmarks</div><div class="tri" style="left:1344.5px;top:794.5px;border-top-color:#444746;border-left-width:4.5px;border-right-width:4.5px;border-top-width:4.5px"></div>
<div class="tab" style="left:1382px;font-size:15.5px;letter-spacing:0.40px;color:#444746;">Roadmap</div><div class="tri" style="left:1464.5px;top:794.5px;border-top-color:#444746;border-left-width:4.5px;border-right-width:4.5px;border-top-width:4.5px"></div>
<svg style="left:1507px;top:790px" width="10" height="13" viewBox="0 0 10 13"><path d="M8 1.2 L2.2 6.4 L8 11.6" fill="none" stroke="#444746" stroke-width="1.7" stroke-width="2"/></svg>
<svg style="left:1551px;top:790px" width="10" height="13" viewBox="0 0 10 13"><path d="M2 1.2 L7.8 6.4 L2 11.6" fill="none" stroke="#c4c7c5" stroke-width="1.8"/></svg>
<div class="abs" style="left:-1.3px;top:754.5px;width:3.6px;height:3.6px;border-radius:50%;background:#6a5ff0"></div>
<div class="abs" style="left:-1.3px;top:761.0px;width:3.6px;height:3.6px;border-radius:50%;background:#6a5ff0"></div>
<div class="abs" style="left:-1.3px;top:767.6px;width:3.6px;height:3.6px;border-radius:50%;background:#6a5ff0"></div>
<div class="abs" style="left:5.2px;top:754.5px;width:3.6px;height:3.6px;border-radius:50%;background:#6a5ff0"></div>
<div class="abs" style="left:5.2px;top:761.0px;width:3.6px;height:3.6px;border-radius:50%;background:#6a5ff0"></div>
<div class="abs" style="left:5.2px;top:767.6px;width:3.6px;height:3.6px;border-radius:50%;background:#6a5ff0"></div>
<div class="abs" style="left:14px;top:732px;width:62px;height:62px;border-radius:50%;background:#675df0;box-shadow:0 3px 10px rgba(0,0,0,0.22)"></div>
<svg style="left:31.7px;top:749.5px" width="26" height="26" viewBox="-13 -13 26 26"><rect x="-1.45" y="-12.8" width="2.9" height="8.2" fill="#fff" transform="rotate(0)"/><rect x="-1.45" y="-12.8" width="2.9" height="8.2" fill="#fff" transform="rotate(30)"/><rect x="-1.45" y="-12.8" width="2.9" height="8.2" fill="#fff" transform="rotate(60)"/><rect x="-1.45" y="-12.8" width="2.9" height="8.2" fill="#fff" transform="rotate(90)"/><rect x="-1.45" y="-12.8" width="2.9" height="8.2" fill="#fff" transform="rotate(120)"/><rect x="-1.45" y="-12.8" width="2.9" height="8.2" fill="#fff" transform="rotate(150)"/><rect x="-1.45" y="-12.8" width="2.9" height="8.2" fill="#fff" transform="rotate(180)"/><rect x="-1.45" y="-12.8" width="2.9" height="8.2" fill="#fff" transform="rotate(210)"/><rect x="-1.45" y="-12.8" width="2.9" height="8.2" fill="#fff" transform="rotate(240)"/><rect x="-1.45" y="-12.8" width="2.9" height="8.2" fill="#fff" transform="rotate(270)"/><rect x="-1.45" y="-12.8" width="2.9" height="8.2" fill="#fff" transform="rotate(300)"/><rect x="-1.45" y="-12.8" width="2.9" height="8.2" fill="#fff" transform="rotate(330)"/><circle r="5" fill="#fff"/><circle r="3.3" fill="#675df0"/></svg>
<!--AFTERGRID-->

</div>
</body>
</html>
